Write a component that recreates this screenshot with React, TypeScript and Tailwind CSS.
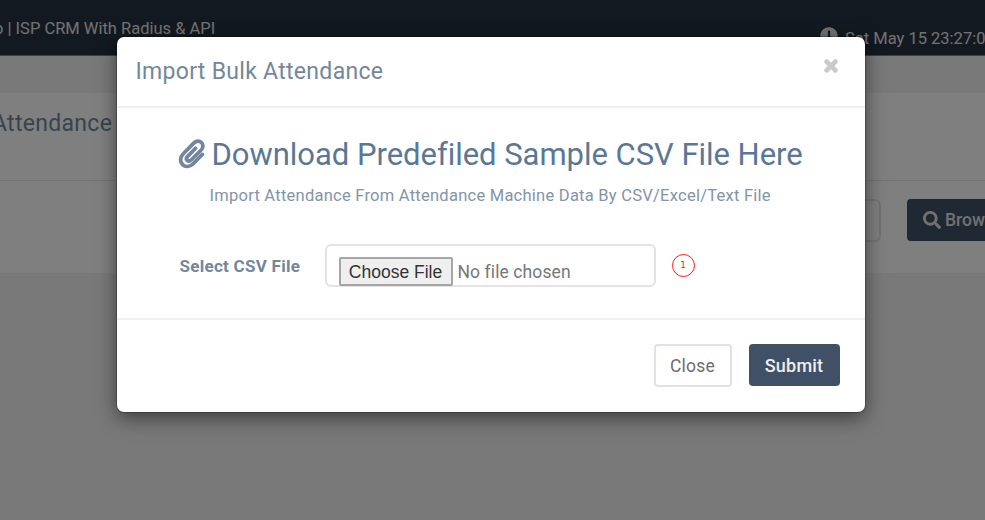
import type { ReactNode } from 'react';
import { FaClock, FaSearch, FaTimes } from 'react-icons/fa';

function PaperclipIcon({ className }: { className?: string }) {
  return (
    <svg viewBox="0 0 28 32" fill="none" stroke="currentColor" strokeLinecap="round" strokeLinejoin="round" className={className}>
      <path
        d="M25.2 17 16 26.4c-3.6 3.6-8.2 4-11.2 1.1s-2.8-7.6.7-11.2L16.3 5.2c2.4-2.4 5.7-2.8 8-.6s1.9 5.6-.5 8L13.7 22.7c-1.3 1.3-3 1.5-4.1.4s-.9-2.8.4-4.1l8.2-8.4"
        strokeWidth="3.9"
      />
    </svg>
  );
}

function TopBar() {
  return (
    <header className="flex h-[56px] justify-between border-b border-[#778391] bg-[#243241] text-[16.5px] text-[#e4e4e4]">
      <span className="-ml-[6px] mt-[17px] whitespace-nowrap">o | ISP CRM With Radius &amp; API</span>
      <div className="mt-[26px] flex w-[165px] shrink-0 gap-[7px] whitespace-nowrap">
        <FaClock className="mt-px size-[18px] shrink-0" />
        <span className="mt-px">Sat May 15 23:27:01</span>
      </div>
    </header>
  );
}

function AttendancePanel() {
  return (
    <section className="mt-[37px] h-[180px] bg-white">
      <h2 className="-ml-[8px] h-[88px] border-b border-[#e6e6e6] pt-[15px] text-[23px] leading-[32px] tracking-[0.3px] text-[#73879c]">
        Attendance
      </h2>
      <div className="flex pl-[300px] pt-[18px]">
        <div className="h-[43px] w-[581px] shrink-0 rounded-[6px] border-2 border-[#e6e6e6]" />
        <button className="ml-[26px] flex h-[42px] w-[120px] shrink-0 items-center gap-[4px] rounded-[4px] bg-[#405167] pl-[16px] text-[17.5px] font-medium text-[#e2e2e2]">
          <FaSearch className="size-[18px]" />
          Browse
        </button>
      </div>
    </section>
  );
}

function FileInput() {
  return (
    <div className="flex h-[43px] w-[331px] items-start rounded-[6px] border-2 border-[#e3e3e3] pl-[12px] pt-[11px]">
      <button className="h-[29px] w-[114px] shrink-0 rounded-[2px] border-2 border-[#a6a6a6] bg-[#efefef] font-['Liberation_Sans',sans-serif] text-[17.5px] leading-[24px] text-[#333]">
        Choose File
      </button>
      <span className="ml-[5px] whitespace-nowrap text-[17.5px] leading-[30px] tracking-[0.1px] text-[#777]">No file chosen</span>
    </div>
  );
}

function ImportModal({ title, children }: { title: string; children: ReactNode }) {
  return (
    <div className="mt-[37px] flex h-[375px] w-[748px] flex-col rounded-[7px] bg-white shadow-[0_6px_20px_rgba(0,0,0,0.5),0_0_1px_1px_rgba(0,0,0,0.25)]">
      <div className="flex h-[71px] shrink-0 justify-between border-b-2 border-[#f0f0f0] pl-[19px] pr-[25px]">
        <h4 className="mt-[19px] text-[23px] leading-[32px] tracking-[0.3px] text-[#73879c]">{title}</h4>
        <FaTimes className="mt-[20px] size-[18px] text-[#c9c9c9]" stroke="currentColor" strokeWidth={40} />
      </div>
      <div className="flex-1">{children}</div>
      <div className="flex h-[94px] shrink-0 justify-end gap-[17px] border-t-2 border-[#f0f0f0] pr-[25px] pt-[24px]">
        <button className="h-[43px] w-[78px] rounded-[4px] border-2 border-[#e2e2e2] pt-px text-[17.5px] tracking-[0.2px] text-[#6e6e6e]">
          Close
        </button>
        <button className="h-[42px] w-[91px] rounded-[4px] bg-[#405167] text-[18px] font-medium tracking-[0.2px] text-[#eee]">
          Submit
        </button>
      </div>
    </div>
  );
}

export default function App() {
  return (
    <div className="relative h-[520px] w-full overflow-hidden bg-[#f2f2f2] font-[Roboto,sans-serif]">
      <TopBar />
      <AttendancePanel />

      {/* Backdrop + dialog */}
      <div className="absolute inset-0 flex items-start bg-black/50 pl-[116.5px]">
        <ImportModal title="Import Bulk Attendance">
          <h1 className="flex items-start pl-[61px] pt-[27px] text-[31px] leading-[40px] text-[#5a7896]">
            <PaperclipIcon className="mr-[7px] mt-[3px] h-[31px] w-[27px] text-[#73879c]" />
            <span className="whitespace-nowrap tracking-[-0.03px]">Download Predefiled Sample CSV File Here</span>
          </h1>
          <p className="whitespace-nowrap pl-[93px] pt-[9px] text-[16.5px] leading-[24px] tracking-[0.25px] text-[#8294aa]">
            Import Attendance From Attendance Machine Data By CSV/Excel/Text File
          </p>
          <div className="mt-[36px] flex items-center pl-[63px]">
            <label className="mt-[2px] w-[145px] whitespace-nowrap text-[17px] font-bold tracking-[0.27px] text-[#73879c]">
              Select CSV File
            </label>
            <FileInput />
            <span className="ml-[16px] flex size-[23px] items-center justify-center rounded-full border border-[#ff1a1a] pt-px font-['DejaVu_Sans',sans-serif] text-[9px] text-[#ff1a1a]">
              1
            </span>
          </div>
        </ImportModal>
      </div>
    </div>
  );
}
